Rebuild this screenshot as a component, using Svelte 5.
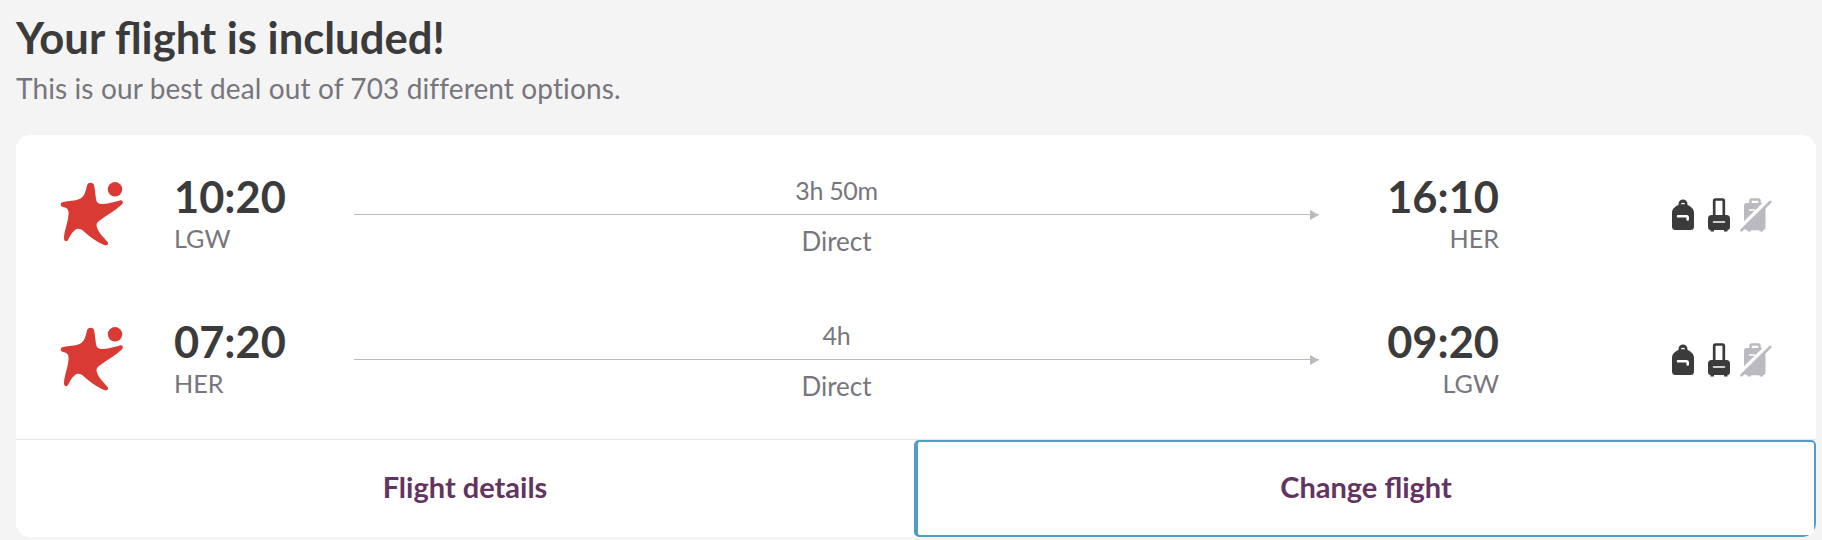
<script lang="ts">
  type Flight = {
    departs: string;
    from: string;
    duration: string;
    stops: string;
    arrives: string;
    to: string;
  };

  const flights: Flight[] = [
    { departs: '10:20', from: 'LGW', duration: '3h 50m', stops: 'Direct', arrives: '16:10', to: 'HER' },
    { departs: '07:20', from: 'HER', duration: '4h', stops: 'Direct', arrives: '09:20', to: 'LGW' }
  ];
</script>

<section class="included">
  <h2>Your flight is included!</h2>
  <p class="subtitle">This is our best deal out of 703 different options.</p>

  <div class="card">
    <div class="flights">
      {#each flights as flight}
        <div class="flight">
          <svg class="airline" width="64" height="66" viewBox="0 0 64 66" fill="#d93a34">
            <path d="M27.200 5C28 2 33.200 2 34 5C35.200 10 35.300 15.500 36.200 20C37 23.300 39 24.300 43 24C49.500 23.500 55 21.500 60 20.400C63 20 63.800 22.600 61.800 24.500C56 30 48 34.500 41 39.500C37.500 42 36 43.500 36.700 46.500C38.200 52.500 43.500 57 47.600 62C49 64.500 47 66 44 65C36.500 61.500 29.500 56.500 24.500 52C20.500 48 17 47.700 14.500 50.500C10.500 54 9.800 57 8 60C6.500 62 4.200 61.500 4 58.500C4 51 7.800 43 8.500 35C8.800 30.500 8 28.500 5 27.600L3 27C-.2 26 0 22.800 3 22C9 20.600 14.500 21.200 19.500 19C25 16.500 25.600 10.500 27.200 5Z" />
            <circle cx="55" cy="9.300" r="7.200" />
          </svg>

          <div class="stop">
            <span class="time">{flight.departs}</span>
            <span class="airport">{flight.from}</span>
          </div>

          <div class="route">
            <span class="duration">{flight.duration}</span>
            <div class="line"></div>
            <span>{flight.stops}</span>
          </div>

          <div class="stop arrival">
            <span class="time">{flight.arrives}</span>
            <span class="airport">{flight.to}</span>
          </div>

          <div class="bags">
            <!-- backpack -->
            <svg width="22" height="36" viewBox="0 0 22 36">
              <path d="M6.500 8V7a4.500 4.500 0 0 1 9 0V8C19 9.500 22 12 22 16V29.500Q22 33 18.500 33H3.500Q0 33 0 29.500V16C0 12 3 9.500 6.500 8Z" fill="#3b3b3b" />
              <path d="M9.300 7.200Q11 5.400 12.700 7.200" fill="none" stroke="#fff" stroke-width="1.200" />
              <path d="M6 19.200H14.500Q15.700 19.200 15.700 20.500V22.500" fill="none" stroke="#fff" stroke-width="2.600" stroke-linecap="round" />
            </svg>
            <!-- cabin trolley -->
            <svg width="22" height="36" viewBox="0 0 22 36">
              <path d="M6.200 20V3.800Q6.200 2.500 7.500 2.500H14.500Q15.800 2.500 15.800 3.800V20" fill="none" stroke="#3b3b3b" stroke-width="2.700" />
              <path d="M3.500 18H18.500Q22 18 22 21.500V29.500Q22 33 19.500 33V34.500H16V33H6V34.500H2.500V33Q0 33 0 29.500V21.500Q0 18 3.500 18Z" fill="#3b3b3b" />
              <path d="M5.500 25H16.500" stroke="#fff" stroke-width="1.500" stroke-linecap="round" />
            </svg>
            <!-- hold bag, not included -->
            <svg width="32" height="36" viewBox="0 0 32 36">
              <path d="M10.500 7V3.600Q10.500 2.400 11.700 2.400H18.300Q19.500 2.400 19.500 3.600V7" fill="none" stroke="#bbbac0" stroke-width="2.500" />
              <path d="M6.500 6H22.500Q25.500 6 25.500 9V30Q25.500 33 23 33.200V34.500H19.500V33.200H11V34.500H7.500V33.200Q4 33 4 30V9Q4 6 6.500 6Z" fill="#bbbac0" />
              <path d="M9 13H15" stroke="#fff" stroke-width="1.500" />
              <path d="M-1 32L28.500 3" stroke="#fff" stroke-width="4" />
              <path d="M1.500 33.200L30.200 5" stroke="#bbbac0" stroke-width="2.700" stroke-linecap="round" />
            </svg>
          </div>
        </div>
      {/each}
    </div>

    <div class="actions">
      <button>Flight details</button>
      <button class="focused">Change flight</button>
    </div>
  </div>
</section>

<style>
  :global(body) {
    background: #f4f4f4;
  }

  .included {
    box-sizing: border-box;
    height: 540px;
    padding: 10px 6px 3px 16px;
    font-family: Lato, "Liberation Sans", sans-serif;
    color: #3b3b3b;
    overflow: hidden;
  }

  h2 {
    margin: 0;
    font-size: 43.6px;
    line-height: 54px;
    font-weight: 700;
  }

  .subtitle {
    margin: 0 0 27px;
    padding-top: 4px;
    font-size: 28px;
    line-height: 40px;
    letter-spacing: 0.12px;
    color: #77767d;
  }

  .card {
    box-sizing: border-box;
    height: 402px;
    display: flex;
    flex-direction: column;
    background: #fff;
    border-radius: 14px;
    overflow: hidden;
  }

  .flights {
    flex: 1;
    padding-top: 7px;
  }

  .flight {
    display: grid;
    grid-template-columns: 114px 180px 965px 180px 1fr;
    align-items: center;
    height: 145px;
    padding: 0 44px;
  }

  .airline {
    margin-bottom: 4px;
  }

  .stop {
    display: flex;
    flex-direction: column;
    padding-bottom: 1px;
  }

  .arrival {
    text-align: right;
  }

  .time {
    font-size: 43.4px;
    line-height: 48px;
    font-weight: 700;
  }

  .airport {
    font-size: 25.2px;
    line-height: 36px;
    color: #77767d;
  }

  .route {
    display: flex;
    flex-direction: column;
    align-items: center;
    padding-top: 2px;
    font-size: 26px;
    line-height: 36px;
    color: #77767d;
  }

  .duration {
    font-size: 25px;
    letter-spacing: -0.3px;
  }

  .line {
    position: relative;
    width: 100%;
    height: 1px;
    margin: 6px 0 8px;
    background: #bbbac0;
  }

  .line::after {
    content: "";
    position: absolute;
    right: 0;
    top: -4px;
    border-left: 9px solid #bbbac0;
    border-top: 5px solid transparent;
    border-bottom: 5px solid transparent;
  }

  .bags {
    display: flex;
    justify-content: flex-end;
    gap: 14px;
  }

  .bags svg:last-child {
    margin-left: -4px;
  }

  .actions {
    display: flex;
    height: 97px;
    border-top: 1px solid #e6e6e8;
  }

  button {
    flex: 1;
    box-sizing: border-box;
    padding: 0 0 4px;
    border: none;
    background: none;
    font-family: inherit;
    font-size: 29px;
    font-weight: 700;
    color: #62345f;
    cursor: pointer;
  }

  .focused {
    flex: none;
    width: 902px;
    border: 2px solid #509dc5;
    border-left-width: 4px;
    border-radius: 5px;
  }
</style>
